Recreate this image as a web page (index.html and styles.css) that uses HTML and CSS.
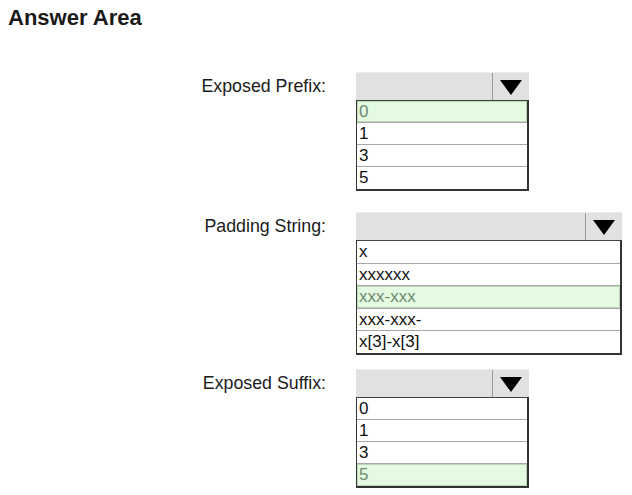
FILE: index.html
```html
<!DOCTYPE html>
<html>
<head>
<meta charset="utf-8">
<link rel="stylesheet" href="styles.css">
</head>
<body>
<h1 class="title">Answer Area</h1>
<div class="rows">
  <div class="row row-prefix">
    <div class="label">Exposed Prefix:</div>
    <div class="dd dd-narrow">
      <div class="dd-head"><div class="dd-field"></div><div class="dd-btn"><svg width="22" height="15" viewBox="0 0 22 15"><polygon points="0,0 22,0 11,15" fill="#000"/></svg></div></div>
      <ul class="dd-list">
        <li class="sel">0</li>
        <li>1</li>
        <li>3</li>
        <li>5</li>
      </ul>
    </div>
  </div>
  <div class="row row-padding">
    <div class="label">Padding String:</div>
    <div class="dd dd-wide">
      <div class="dd-head"><div class="dd-field"></div><div class="dd-btn"><svg width="22" height="15" viewBox="0 0 22 15"><polygon points="0,0 22,0 11,15" fill="#000"/></svg></div></div>
      <ul class="dd-list">
        <li>x</li>
        <li>xxxxxx</li>
        <li class="sel">xxx-xxx</li>
        <li>xxx-xxx-</li>
        <li>x[3]-x[3]</li>
      </ul>
    </div>
  </div>
  <div class="row row-suffix">
    <div class="label">Exposed Suffix:</div>
    <div class="dd dd-narrow">
      <div class="dd-head"><div class="dd-field"></div><div class="dd-btn"><svg width="22" height="15" viewBox="0 0 22 15"><polygon points="0,0 22,0 11,15" fill="#000"/></svg></div></div>
      <ul class="dd-list">
        <li>0</li>
        <li>1</li>
        <li>3</li>
        <li class="sel">5</li>
      </ul>
    </div>
  </div>
</div>
</body>
</html>
```
FILE: styles.css
```css
html, body {
  margin: 0;
  padding: 0;
  background: #fff;
}
body {
  font-family: "Liberation Sans", Arial, sans-serif;
  color: #111;
  padding: 6px 0 0 8px;
}
.title {
  margin: 0;
  font-size: 22px;
  font-weight: bold;
  line-height: 24px;
  color: #1a1a1a;
}
.rows {
  display: flex;
  flex-direction: column;
  margin-top: 42px;
}
.row {
  display: flex;
  align-items: flex-start;
}
.row-padding { margin-top: 21px; }
.row-suffix { margin-top: 14px; }
.label {
  width: 318px;
  text-align: right;
  font-size: 17.8px;
  line-height: 28px;
  color: #1a1a1a;
  flex: none;
}
.dd {
  margin-left: 30px;
  flex: none;
}
.dd-narrow { width: 173px; }
.dd-wide { width: 266px; }
.dd-head {
  display: flex;
  height: 27px;
  background: #e1e1e1;
  border-top: 1px solid #ececec;
}
.dd-field {
  flex: 1;
  border-right: 1px solid #9a9a9a;
}
.dd-btn {
  width: 36px;
  display: flex;
  align-items: center;
  justify-content: center;
  padding-top: 2px;
  box-sizing: border-box;
}
.dd-list {
  list-style: none;
  margin: 0;
  padding: 0;
  border: 1px solid #333;
  border-width: 1px 2px 2px 1px;
  border-top-color: #444;
}
.dd-list li {
  height: 21px;
  line-height: 22px;
  font-size: 17px;
  padding-left: 2px;
  border-bottom: 1px solid #a8a8a8;
  color: #111;
}
.dd-wide .dd-list li {
  height: 21.5px;
}
.dd-list li:last-child {
  border-bottom: none;
  height: 22px;
}
.dd-list li.sel {
  background: #e4fbe2;
  color: #6f8a6f;
  box-shadow: inset 0 0 0 1px #bcd6b8;
}
```
